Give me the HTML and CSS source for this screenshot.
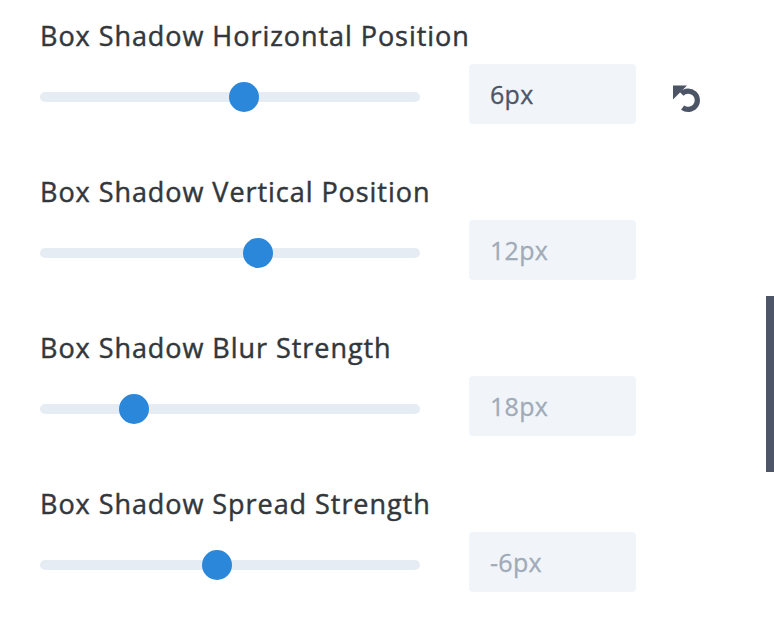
FILE: index.html
```html
<!DOCTYPE html>
<html>
<head>
<meta charset="utf-8">
<link rel="stylesheet" href="styles.css">
</head>
<body>
<div class="panel">
  <div class="field">
    <div class="label">Box Shadow Horizontal Position</div>
    <div class="row">
      <div class="slider"><div class="track"></div><div class="thumb" style="left:204px"></div></div>
      <div class="input active">6px</div>
      <div class="reset">
        <svg viewBox="0 0 28 30" width="28" height="30">
          <path d="M8.6 9.8 A9.2 9.2 0 1 1 9.6 23.6" fill="none" stroke="#4c5566" stroke-width="5.2"/>
          <path d="M0 1.5 L14 1.5 L0 15.5 Z" fill="#4c5566"/>
        </svg>
      </div>
    </div>
  </div>
  <div class="field">
    <div class="label">Box Shadow Vertical Position</div>
    <div class="row">
      <div class="slider"><div class="track"></div><div class="thumb" style="left:218px"></div></div>
      <div class="input">12px</div>
    </div>
  </div>
  <div class="field">
    <div class="label">Box Shadow Blur Strength</div>
    <div class="row">
      <div class="slider"><div class="track"></div><div class="thumb" style="left:94px"></div></div>
      <div class="input">18px</div>
    </div>
  </div>
  <div class="field">
    <div class="label">Box Shadow Spread Strength</div>
    <div class="row">
      <div class="slider"><div class="track"></div><div class="thumb" style="left:177px"></div></div>
      <div class="input">-6px</div>
    </div>
  </div>
</div>
<div class="scrollbar"></div>
</body>
</html>
```
FILE: styles.css
```css
html, body {
  margin: 0;
  padding: 0;
  background: #ffffff;
  font-family: "Open Sans", "Noto Sans", sans-serif;
}
.panel {
  padding: 18px 0 0 40px;
  display: flex;
  flex-direction: column;
  gap: 50px;
}
.field {
  display: flex;
  flex-direction: column;
  gap: 10px;
}
.label {
  font-size: 27px;
  line-height: 36px;
  color: #32373c;
  font-weight: 400;
  letter-spacing: 0.95px;
  -webkit-text-stroke: 0.45px #32373c;
}
.row {
  display: flex;
  align-items: center;
  height: 60px;
}
.slider {
  position: relative;
  width: 380px;
  height: 30px;
  margin-top: 6px;
  display: flex;
  align-items: center;
}
.track {
  width: 100%;
  height: 10px;
  border-radius: 5px;
  background: #e6ecf3;
}
.thumb {
  position: absolute;
  top: 0;
  width: 30px;
  height: 30px;
  margin-left: -15px;
  border-radius: 50%;
  background: #2b87da;
}
.input {
  margin-left: 49px;
  width: 167px;
  height: 60px;
  box-sizing: border-box;
  padding-left: 21px;
  border-radius: 4px;
  background: #f1f5f9;
  font-size: 25px;
  line-height: 60px;
  letter-spacing: 0.3px;
  color: #a0aab8;
  -webkit-text-stroke: 0.3px #a0aab8;
}
.input.active {
  color: #4c5566;
  -webkit-text-stroke: 0.3px #4c5566;
}
.reset {
  margin-left: 37px;
  margin-top: 10px;
  width: 28px;
  height: 30px;
  display: flex;
}
.scrollbar {
  position: absolute;
  top: 296px;
  left: 766px;
  width: 8px;
  height: 176px;
  background: #4d5668;
}
```
